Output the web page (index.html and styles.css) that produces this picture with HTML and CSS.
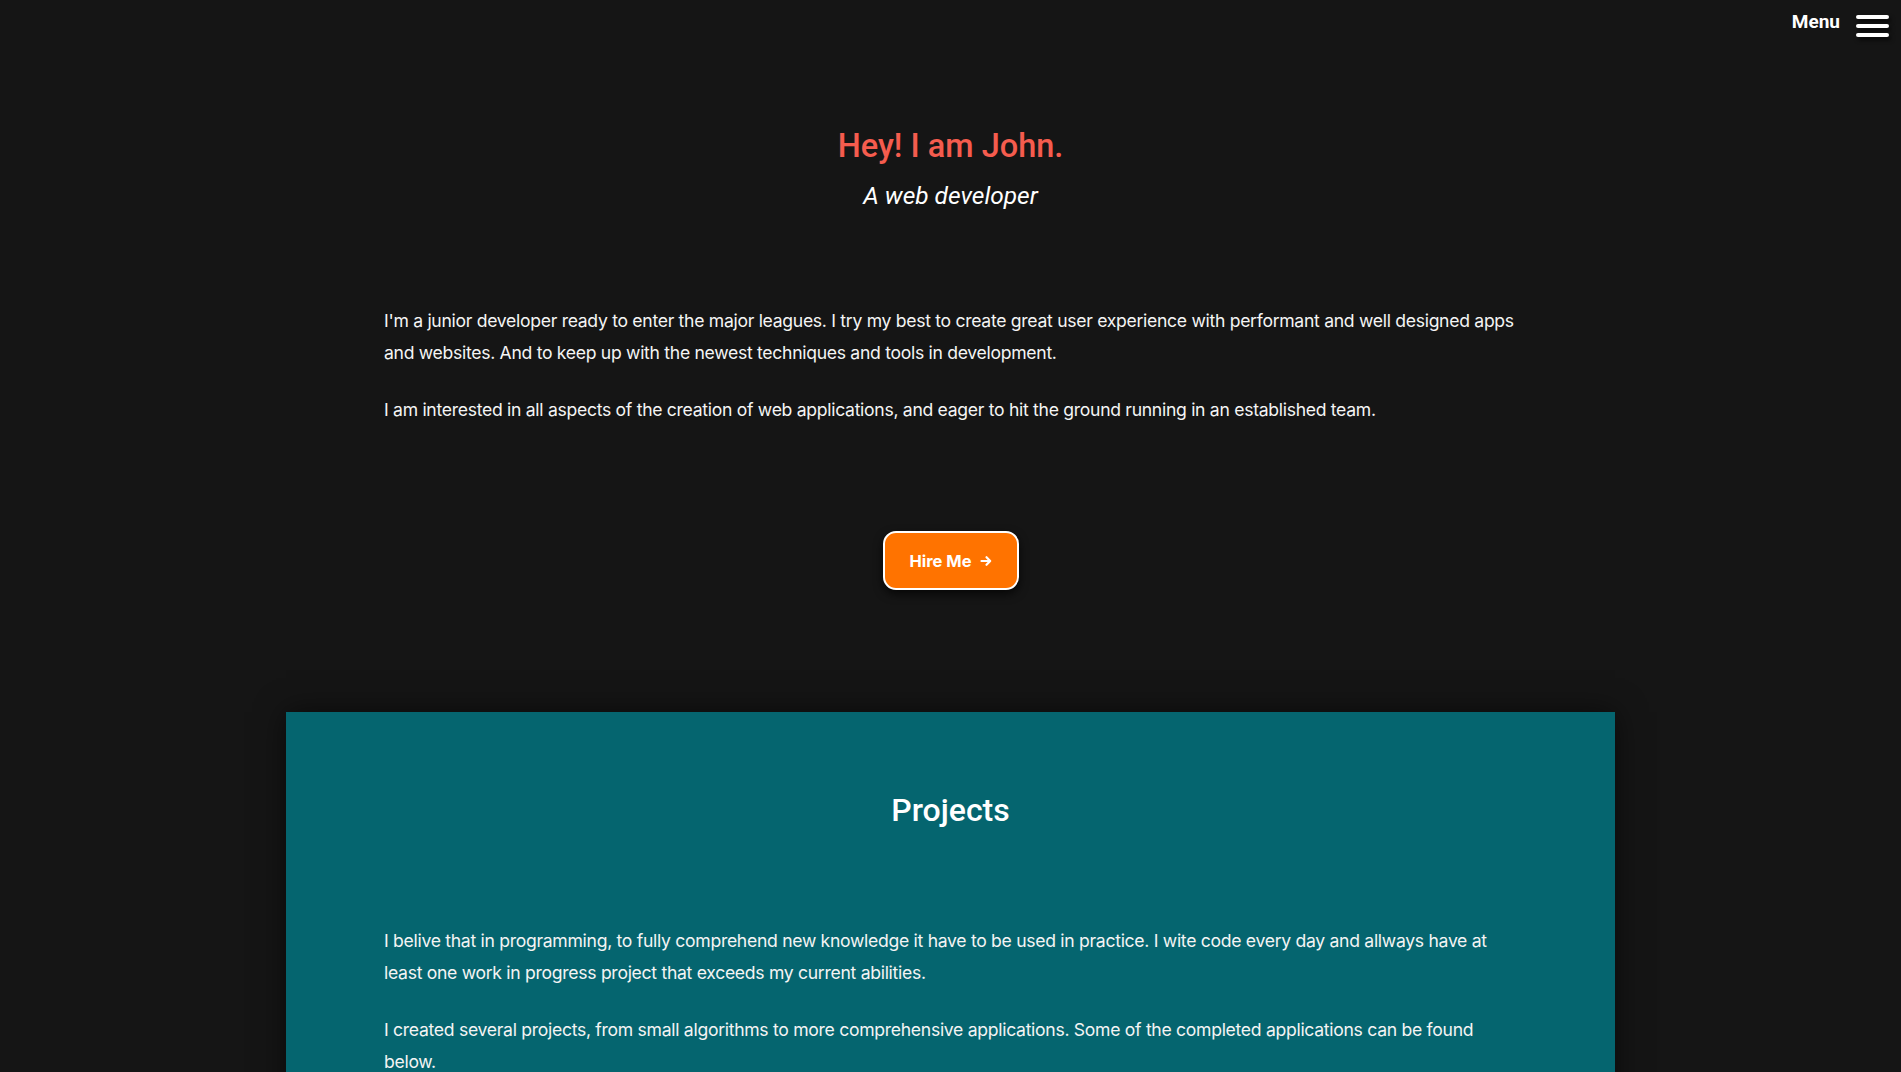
FILE: index.html
```html
<!DOCTYPE html>
<html lang="en">
<head>
<meta charset="utf-8">
<title>John - Web developer</title>
<link rel="stylesheet" href="styles.css">
</head>
<body>
<nav class="nav">
  <span class="nav-label">Menu</span>
  <button class="burger" aria-label="Menu">
    <span class="bar"></span><span class="bar"></span><span class="bar"></span>
  </button>
</nav>
<header class="hero">
  <h1 class="hero-title">Hey! I am John.</h1>
  <p class="hero-sub">A web developer</p>
</header>
<section class="about text-col">
  <p>I'm a junior developer ready to enter the major leagues. I try my best to create great user experience with performant and well designed apps and websites. And to keep up with the newest techniques and tools in development.</p>
  <p>I am interested in all aspects of the creation of web applications, and eager to hit the ground running in an established team.</p>
</section>
<div class="cta">
  <a class="btn" href="#">Hire Me
    <svg class="arrow" viewBox="0 0 12 12" width="12" height="12"><path d="M1.5 6h8.5M6.5 2.2L10.2 6 6.5 9.8" fill="none" stroke="#fff" stroke-width="2.2" stroke-linecap="round" stroke-linejoin="round"/></svg>
  </a>
</div>
<section class="projects">
  <h2 class="projects-title">Projects</h2>
  <div class="text-col">
    <p>I belive that in programming, to fully comprehend new knowledge it have to be used in practice. I wite code every day and allways have at least one work in progress project that exceeds my current abilities.</p>
    <p>I created several projects, from small algorithms to more comprehensive applications. Some of the completed applications can be found below.</p>
  </div>
</section>
</body>
</html>
```
FILE: styles.css
```css
html, body {
  margin: 0;
  padding: 0;
}
body {
  background: #151515;
  color: #f4f4f4;
  font-family: Inter, "Open Sans", sans-serif;
  overflow: hidden;
}
.nav {
  position: absolute;
  top: 10px;
  right: 12px;
  display: flex;
  align-items: flex-start;
  gap: 16px;
}
.nav-label {
  font-family: Roboto, sans-serif;
  font-weight: 700;
  font-size: 19px;
  line-height: 24px;
  color: #fff;
}
.burger {
  display: flex;
  flex-direction: column;
  gap: 5px;
  background: none;
  border: 0;
  padding: 5px 0 0;
  width: 33px;
}
.bar {
  display: block;
  height: 4px;
  width: 33px;
  background: #fff;
  border-radius: 2px;
  box-shadow: 2px 3px 4px rgba(0,0,0,0.7);
}
.hero {
  text-align: center;
  padding-top: 127px;
}
.hero-title {
  margin: 0;
  font-family: Roboto, sans-serif;
  font-weight: 500;
  font-size: 32.5px;
  line-height: 38px;
  color: #f55c4e;
}
.hero-sub {
  margin: 16px 0 0;
  font-family: Roboto, sans-serif;
  font-style: italic;
  font-size: 24.5px;
  line-height: 29px;
  color: #fff;
}
.text-col {
  max-width: 1133px;
  margin: 0 auto;
}
.text-col p {
  margin: 0 0 25px;
  font-size: 17.6px;
  line-height: 32px;
  letter-spacing: -0.3px;
}
.about {
  margin-top: 95px;
}
.cta {
  display: flex;
  justify-content: center;
  margin-top: 105px;
}
.btn {
  display: flex;
  align-items: center;
  justify-content: center;
  gap: 8px;
  box-sizing: border-box;
  width: 136px;
  height: 59px;
  background: #ff7300;
  border: 2px solid #fff;
  border-radius: 13px;
  color: #fff;
  font-weight: 700;
  font-size: 16.5px;
  text-decoration: none;
  box-shadow: 0 4px 10px rgba(0,0,0,0.7);
}
.arrow {
  display: block;
}
.projects {
  width: 1329px;
  margin: 122px auto 0;
  background: #05656f;
  padding: 79px 0 40px;
  box-shadow: 0 0 28px rgba(0,0,0,0.55);
}
.projects-title {
  margin: 0 0 96px;
  text-align: center;
  font-family: Roboto, sans-serif;
  font-weight: 500;
  font-size: 32px;
  line-height: 38px;
  color: #fff;
}
```
